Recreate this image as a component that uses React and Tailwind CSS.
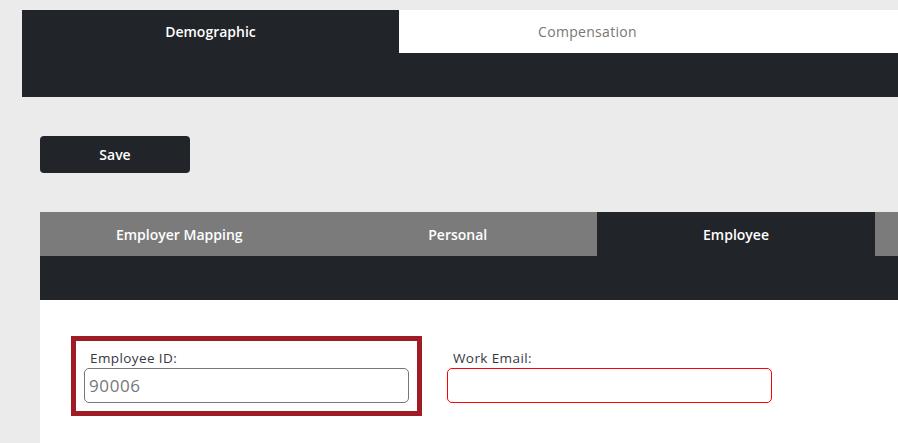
export default function App() {
  const font = { fontFamily: '"Open Sans", "Liberation Sans", sans-serif' };
  return (
    <div className="w-[898px] h-[443px] overflow-hidden bg-[#ebebeb]" style={font}>
      {/* top-level tabs */}
      <div className="pt-[10px] pl-[22px]">
        <div className="w-[900px]">
          <div className="flex h-[43px] bg-white">
            <div className="w-[377px] flex items-center justify-center bg-[#212429] text-white text-[14px] font-semibold">
              Demographic
            </div>
            <div className="w-[377px] flex items-center justify-center text-[#777] text-[14px] tracking-[0.3px]">
              Compensation
            </div>
          </div>
          <div className="h-[44px] bg-[#212429]" />
        </div>
      </div>

      <div className="pl-[40px]">
        <button className="mt-[39px] w-[150px] h-[37px] rounded-[4px] bg-[#212429] text-white text-[14px] font-semibold">
          Save
        </button>

        {/* section tabs */}
        <div className="mt-[39px] w-[880px]">
          <div className="flex h-[44px] bg-[#7b7b7b] text-white text-[14px] font-semibold">
            <div className="w-[278.5px] flex items-center justify-center">Employer Mapping</div>
            <div className="w-[278.5px] flex items-center justify-center">Personal</div>
            <div className="w-[278px] flex items-center justify-center bg-[#212429]">Employee</div>
          </div>
          <div className="h-[44px] bg-[#212429]" />

          <div className="bg-white h-[200px] pl-[31px] pt-[36px]">
            <div className="flex items-start">
              <div className="border-[5px] border-[#a01c24] p-2">
                <label className="block pl-[6px] h-[19px] text-[13.5px] tracking-[0.4px] leading-[19px] text-[#383844]">Employee ID:</label>
                <div className="w-[325px] h-[35px] border border-[#777] rounded-[5px] flex items-center pl-[4px] text-[17px] tracking-[0.6px] text-[#777]">
                  90006
                </div>
              </div>
              <div className="ml-[25px] pt-[13px]">
                <label className="block pl-[6px] h-[19px] text-[13.5px] tracking-[0.4px] leading-[19px] text-[#383844]">Work Email:</label>
                <div className="w-[325px] h-[35px] border border-[#ff0000] rounded-[5px]" />
              </div>
            </div>
          </div>
        </div>
      </div>
    </div>
  );
}
